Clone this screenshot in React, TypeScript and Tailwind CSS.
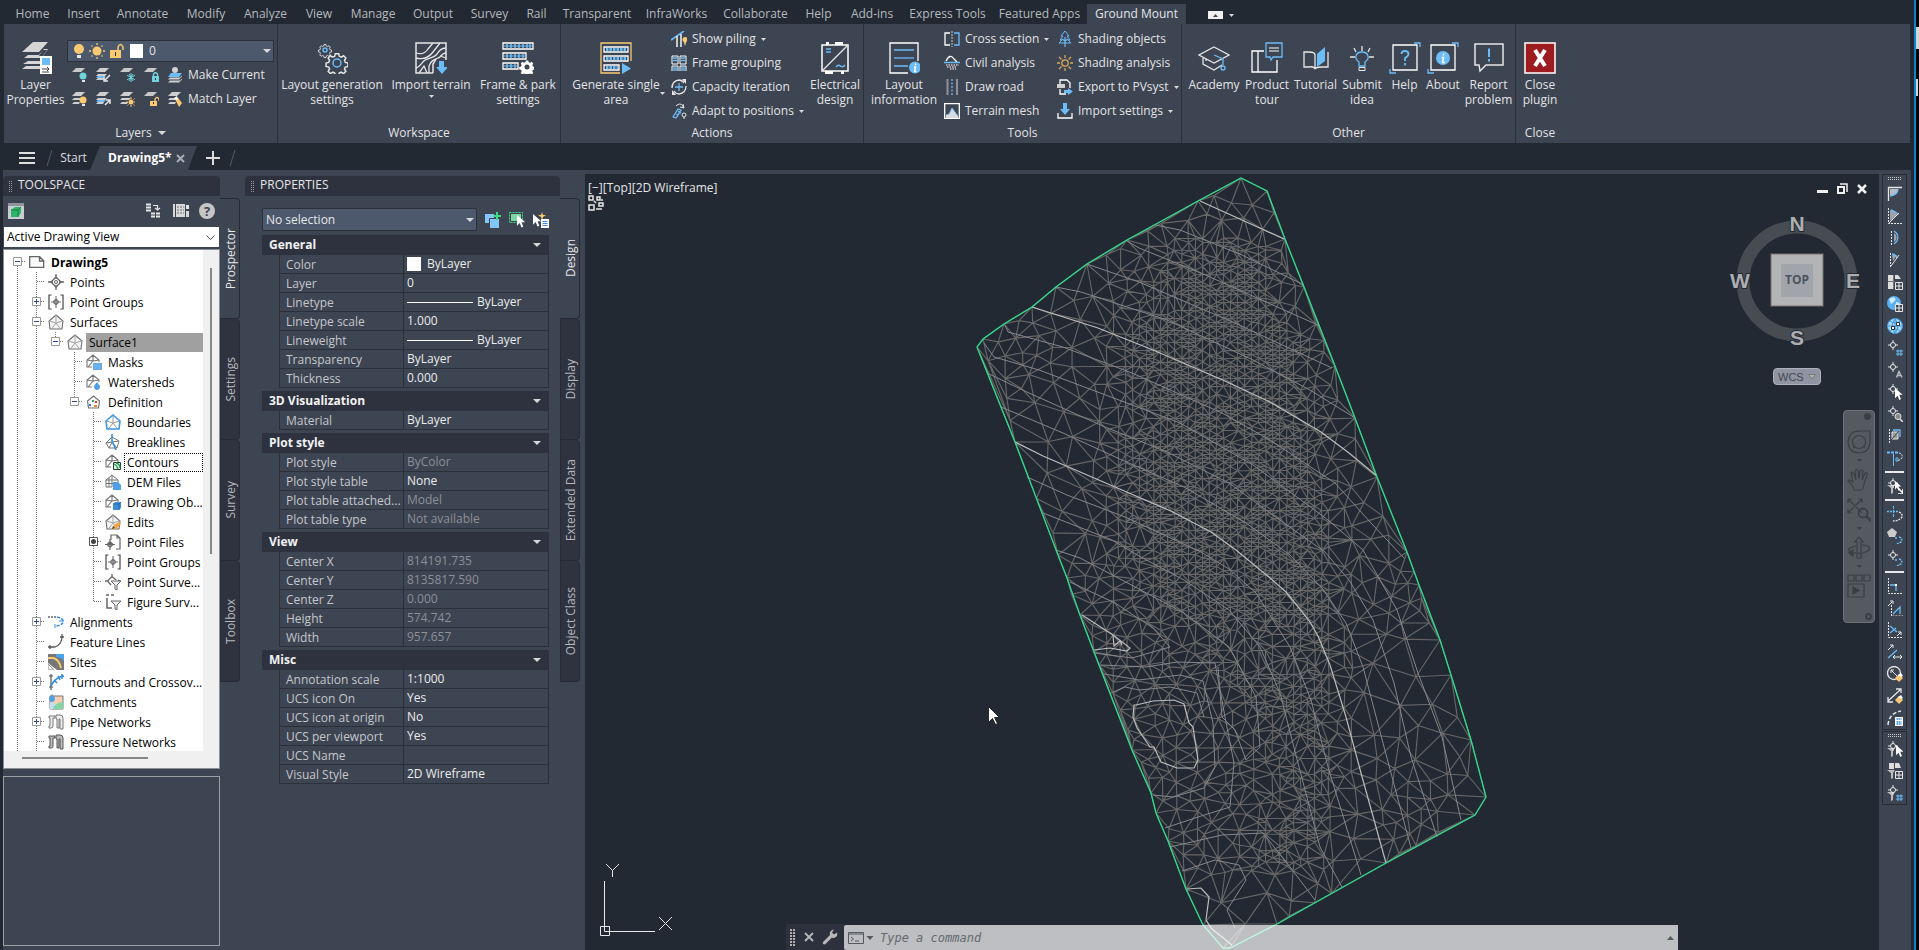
import type { ReactNode } from 'react';

const W = '#e6e6e6';
const B = '#6cbcf7';
const Y = '#fcc973';

type Point = [number, number];

/* ------------------------------------------------------------------ */
/* Terrain mesh                                                        */
/* ------------------------------------------------------------------ */

const boundary: Point[] = [
  [1241, 178], [1267, 191], [1285, 239], [1304, 287], [1335, 366], [1355, 418], [1377, 477], [1407, 552],
  [1419, 585], [1440, 640], [1451, 675], [1471, 740], [1486, 797], [1475, 815], [1386, 863], [1277, 924],
  [1230, 948], [1223, 948], [1203, 925], [1186, 889], [1168, 841], [1156, 813], [1151, 793], [1132, 750],
  [1094, 652], [1080, 615], [1067, 578], [1058, 555], [1015, 442], [977, 347], [983, 339], [1004, 324],
  [1032, 307], [1056, 287], [1087, 264], [1127, 240], [1198, 201],
];

const majorContours = [
  '1200,201 1242,220 1284,239',
  '1032,307 1098,328 1153,350 1225,381 1270,402 1321,432 1349,453 1377,476',
  '1015,442 1043,456 1115,487 1173,512 1211,532 1236,550 1270,578 1286,592 1299,608 1310,622 1318,636 1330,665 1346,717 1361,773 1386,863',
  '1136,705 1153,701 1174,700 1184,704 1189,723 1193,727 1198,760 1194,768 1177,768 1161,762 1154,747 1150,747 1137,728 1133,717 1134,705 1136,705',
  '1082,615 1113,635 1130,648 1127,651 1110,648 1094,650',
  '1113,635 1114,646 1120,641 1122,645',
  '1187,889 1201,888 1209,897 1206,920 1212,929 1232,945',
];

const minorContours = [
  '1155,225 1180,230 1242,255 1304,285',
  '1127,241 1139,248 1201,273 1320,326',
  '1087,264 1139,282 1235,323 1332,368',
  '1056,287 1081,292 1167,320 1253,360 1310,390 1355,418',
  '1005,325 1008,332 1063,347 1132,373 1222,413 1270,440 1335,483 1371,523 1404,558',
  '984,343 994,357 1039,370 1111,397 1180,423 1253,465 1301,500 1328,520 1363,550 1397,610 1418,673 1442,737 1461,820',
  '987,373 1029,393 1105,427 1167,452 1229,483 1277,518 1325,552 1349,580 1373,620 1394,683 1411,757 1437,837',
  '1001,407 1063,433 1122,460 1184,487 1246,523 1290,555 1322,588 1346,623 1363,667 1383,743 1411,848',
  '1027,477 1067,495 1125,517 1201,552 1229,569 1256,593 1290,647 1311,700 1328,767 1361,875',
  '1043,513 1112,540 1139,556 1184,580 1229,610 1260,647 1280,693 1299,767 1320,847 1342,887',
  '1056,550 1080,558 1122,580 1184,613 1229,647 1256,697 1260,747 1246,760 1235,730 1222,717 1218,667',
  '1070,582 1115,603 1153,628 1170,647 1132,658 1094,653',
  '1101,665 1146,667 1177,662 1215,663 1225,717 1234,763 1230,807 1198,817 1165,828',
  '1104,674 1139,680 1180,675 1203,681 1213,723 1215,767 1204,788 1173,797 1153,795',
  '1111,693 1125,687 1139,690 1170,687 1197,693 1204,717',
  '1170,847 1222,835 1263,833 1290,867 1315,900',
  '1182,871 1215,860 1239,865 1246,880 1227,910 1235,928',
];

// y, left edge, right edge of the densely surveyed strip
const strip = [
  [238, 1170, 1266], [300, 1136, 1278], [340, 1122, 1304], [403, 1118, 1318], [560, 1118, 1334],
  [617, 1134, 1334], [655, 1190, 1330], [717, 1258, 1328], [783, 1268, 1332], [833, 1252, 1318], [872, 1240, 1304],
];

function stripAt(y: number): Point | null {
  for (let i = 1; i < strip.length; i++) {
    const [y0, l0, r0] = strip[i - 1];
    const [y1, l1, r1] = strip[i];
    if (y >= y0 && y <= y1) {
      const t = (y - y0) / (y1 - y0);
      return [l0 + (l1 - l0) * t, r0 + (r1 - r0) * t];
    }
  }
  return null;
}

function inside(x: number, y: number) {
  let hit = false;
  for (let i = 0, j = boundary.length - 1; i < boundary.length; j = i++) {
    const [xi, yi] = boundary[i];
    const [xj, yj] = boundary[j];
    if (yi > y !== yj > y && x < ((xj - xi) * (y - yi)) / (yj - yi) + xi) hit = !hit;
  }
  return hit;
}

interface Circle {
  a: number;
  b: number;
  c: number;
  x: number;
  y: number;
  r: number;
}

function circum(p: Point[], a: number, b: number, c: number): Circle {
  const [ax, ay] = p[a];
  const [bx, by] = p[b];
  const [cx, cy] = p[c];
  const d = 2 * (ax * (by - cy) + bx * (cy - ay) + cx * (ay - by)) || 1e-9;
  const a2 = ax * ax + ay * ay;
  const b2 = bx * bx + by * by;
  const c2 = cx * cx + cy * cy;
  const x = (a2 * (by - cy) + b2 * (cy - ay) + c2 * (ay - by)) / d;
  const y = (a2 * (cx - bx) + b2 * (ax - cx) + c2 * (bx - ax)) / d;
  return { a, b, c, x, y, r: (ax - x) ** 2 + (ay - y) ** 2 };
}

// Sweep version of Bowyer-Watson
function triangulate(source: Point[]) {
  const n = source.length;
  const pts = [...source].sort((p, q) => p[0] - q[0]);
  pts.push([-9000, -9000], [1200, 20000], [12000, -9000]);
  let open = [circum(pts, n, n + 1, n + 2)];
  const closed: Circle[] = [];
  for (let i = 0; i < n; i++) {
    const [x, y] = pts[i];
    const edges = new Map<number, number[] | null>();
    const next: Circle[] = [];
    for (const t of open) {
      const dx = x - t.x;
      if (dx > 0 && dx * dx > t.r) {
        closed.push(t);
        continue;
      }
      if (dx * dx + (y - t.y) ** 2 > t.r) {
        next.push(t);
        continue;
      }
      for (const [u, v] of [[t.a, t.b], [t.b, t.c], [t.c, t.a]]) {
        const key = Math.min(u, v) * 100000 + Math.max(u, v);
        edges.set(key, edges.has(key) ? null : [u, v]);
      }
    }
    edges.forEach((e) => {
      if (e) next.push(circum(pts, e[0], e[1], i));
    });
    open = next;
  }
  return { pts, triangles: [...closed, ...open].filter((t) => t.a < n && t.b < n && t.c < n) };
}

function buildMesh() {
  let seed = 20231;
  const rand = () => {
    seed = (seed * 16807) % 2147483647;
    return seed / 2147483647;
  };
  const pts: Point[] = [];
  boundary.forEach(([x, y], i) => {
    const [nx, ny] = boundary[(i + 1) % boundary.length];
    const parts = Math.max(1, Math.round(Math.hypot(nx - x, ny - y) / 80));
    for (let k = 0; k < parts; k++) pts.push([x + ((nx - x) * k) / parts, y + ((ny - y) * k) / parts]);
  });
  for (let x = 1118; x < 1336; x += 7) {
    for (let y = 238; y < 872; y += 4) {
      const s = stripAt(y);
      if (!s || x < s[0] || x > s[1] || !inside(x, y)) continue;
      const core = x > s[0] + 34 && x < s[1] - 14 && y > 256 && y < 625;
      if (rand() < (core ? 0.66 : 0.38)) pts.push([x + rand() * 1.2, y + rand() * 0.7]);
    }
  }
  for (let k = 0; k < 9000; k++) {
    const x = 977 + rand() * 510;
    const y = 180 + rand() * 768;
    if (!inside(x, y)) continue;
    const s = stripAt(y);
    if (s && x > s[0] - 4 && x < s[1] + 4) continue;
    // the survey thins out in patches away from the strip
    let gap = 19 + 8 * Math.sin(x / 31) * Math.cos(y / 37);
    if (s && x > s[0] - 24 && x < s[1] + 22) gap = 10;
    if (y > 560 && y < 875 && x < 1280) gap = 10;
    if (y < 240) gap = 15;
    if (pts.every(([px, py]) => (px - x) ** 2 + (py - y) ** 2 > gap * gap)) {
      pts.push([gap < 12 ? Math.round(x / 7) * 7 + rand() : x, y]);
    }
  }
  const mesh = triangulate(pts);
  const seen = new Set<number>();
  let path = '';
  for (const { a, b, c } of mesh.triangles) {
    const [p, q, r] = [mesh.pts[a], mesh.pts[b], mesh.pts[c]];
    if (!inside((p[0] + q[0] + r[0]) / 3, (p[1] + q[1] + r[1]) / 3)) continue;
    for (const [u, v] of [[a, b], [b, c], [c, a]]) {
      const key = Math.min(u, v) * 100000 + Math.max(u, v);
      if (seen.has(key)) continue;
      seen.add(key);
      const [s, e] = [mesh.pts[u], mesh.pts[v]];
      path += `M${s[0].toFixed(1)} ${s[1].toFixed(1)}L${e[0].toFixed(1)} ${e[1].toFixed(1)}`;
    }
  }
  return path;
}

const meshPath = buildMesh();

/* ------------------------------------------------------------------ */
/* Icons                                                               */
/* ------------------------------------------------------------------ */

function Svg({ size = 16, children }: { size?: number; children: ReactNode }) {
  return (
    <svg width={size} height={size} viewBox={`0 0 ${size} ${size}`} fill="none" className="shrink-0" aria-hidden="true">
      {children}
    </svg>
  );
}

function Caret({ small }: { small?: boolean }) {
  return (
    <svg width={small ? 5 : 8} height={small ? 3 : 4} viewBox="0 0 8 4" preserveAspectRatio="none" className="shrink-0" aria-hidden="true">
      <path d="M0 0h8L4 4z" fill="#d8d8d8" />
    </svg>
  );
}

const sheet = 'M5 1h9l-4 4H1z';
const stack = 'M5 1h9l-4 4H1zM3 7h9l-2 2H1zM3 11h6l-1 2H1z';
const gear =
  'M-1.5-8h3l.5 2.2 1.7.7 2-1.2 2 2-1.2 2 .7 1.8 2.3.5v3l-2.3.5-.7 1.7 1.2 2-2 2-2-1.2-1.7.7-.5 2.3h-3l-.5-2.3-1.7-.7-2 1.2-2-2 1.2-2-.7-1.7-2.3-.5v-3l2.3-.5.7-1.8-1.2-2 2-2 2 1.2 1.7-.7z';
const cursor = 'M0 0v12l3-3 2 5 2-1-2-5h4z';

const bulb = (c: string) => (
  <>
    <circle cx="12" cy="9" r="3.5" fill={c} />
    <path d="M11 13h3v2h-3z" fill={W} />
  </>
);

const layerTools: { label: string; icon: ReactNode }[] = [
  { label: 'Layer off', icon: <><path d={sheet} fill="#c9c9c9" />{bulb('#6fd3dc')}</> },
  { label: 'Isolate layer', icon: <><path d={stack} fill="#d0d0d0" /><path d="M3 9h8l-2 2H1z" fill={B} /><path d="M15 8l-5 5M9 10v4h4" stroke={W} strokeWidth="1.5" /></> },
  { label: 'Freeze layer', icon: <><path d={sheet} fill="#c9c9c9" /><path d="M12 6v9M8 8.300l8 4.500M16 8.300l-8 4.500M10 7l4 7M14 7l-4 7" stroke="#6fd3dc" /></> },
  { label: 'Lock layer', icon: <><path d={sheet} fill="#c9c9c9" /><path d="M9 9h7v6H9z" fill="#6fd3dc" /><path d="M10.500 9V7q2-2.500 4 0v2" stroke="#6fd3dc" strokeWidth="1.300" /><path d="M12 11h1v2h-1z" fill="#333" /></> },
  { label: 'Layer on', icon: <><path d={stack} fill="#d0d0d0" />{bulb(Y)}</> },
  { label: 'Unisolate layer', icon: <><path d={stack} fill="#d0d0d0" /><path d="M3 9h8l-2 2H1z" fill={B} /><path d="M10 14l5-5M11 9h4v4" stroke={W} strokeWidth="1.500" /></> },
  { label: 'Thaw layer', icon: <><path d={stack} fill="#d0d0d0" /><circle cx="12" cy="11" r="2.500" fill={Y} /><path d="M12 6v2M12 14v2M7 11h2M15 11h1M8.500 7.500l1 1M14.500 13.500l1 1M15.500 7.500l-1 1M9.500 13.500l-1 1" stroke={Y} /></> },
  { label: 'Unlock layer', icon: <><path d={sheet} fill="#c9c9c9" /><path d="M7 10h7v5H7z" fill={Y} /><path d="M12 10V8q2-3 4 0v2" stroke={Y} strokeWidth="1.300" /><path d="M10 11h1v2h-1z" fill="#333" /></> },
];

const icons = {
  layerProps: (
    <>
      <path d="M13 0h15l-9 10H2zM8 14h15l4-6h-4l-4 6M8 13h11l5-6h4l-6 9H4zM8 19h12l2-2v5H3zM6 24h14v3H2z" fill="#d6d6d6" />
      <path d="M20 14h12v18H20z" fill="#fff" />
      <path d="M22 16h8v7h-8z" fill={B} />
      <path d="M22 27h7M27 25l2 2-2 2M29 30h-7" stroke="#444" />
    </>
  ),
  gears: (
    <>
      <g stroke={W} strokeWidth="1.300">
        <path d={gear} transform="translate(9 8) scale(.68)" />
        <path d={gear} transform="translate(21 21) scale(1.150)" />
      </g>
      <circle cx="9" cy="8" r="2" stroke={B} strokeWidth="1.500" />
      <circle cx="21" cy="21" r="4" stroke={B} strokeWidth="1.500" />
    </>
  ),
  terrain: (
    <>
      <path d="M18 31H1V1h30v17M18 31v-9l3-5" stroke={W} strokeWidth="1.500" />
      <path d="M1 11c6 2 10-1 12-4l5-6M1 16c8 2 14-2 17-6l7-9M31 6c-5 0-7 3-9 6-3 4-9 4-12 6s-5 7-9 8M31 11c-5 0-4 4-8 5-5 2-7 3-9 8v7M4 31l5-7 3 7M31 16l-6-2" stroke={W} strokeWidth="1.300" />
      <path d="M24 19h5v6h4l-6 7-6-7h3z" fill={B} />
    </>
  ),
  frames: (
    <>
      <g stroke="#fff" strokeWidth="1.300">
        <path d="M1 1h30v6H1zM1 11h23v6H1zM1 21h15v6H1z" />
      </g>
      <path d="M2 4h28M2 14h21M2 24h13" stroke={B} />
      <path d="M5 2v4M9 2v4M13 2v4M17 2v4M21 2v4M25 2v4M28 2v4M5 12v4M9 12v4M13 12v4M17 12v4M21 12v4M5 22v4M9 22v4M13 22v4" stroke={B} strokeWidth="1.500" />
      <path d={gear} transform="translate(25 25) scale(.82)" fill="#fff" />
      <circle cx="25" cy="25" r="2.500" fill="#3d4452" />
    </>
  ),
  generate: (
    <>
      <path d="M20 31H1V1h30v18" stroke={Y} strokeWidth="1.300" />
      <path d="M4 5h24v5H4zM4 14h24v5H4zM4 23h15v5H4z" fill="#3d4452" stroke="#fff" strokeWidth="1.300" />
      <path d="M6 7.500h20M6 16.500h20M6 25.500h12" stroke={B} strokeWidth="3" strokeDasharray="2.500 1" />
      <path d="M22 21l9 5.500-9 5.500z" fill={B} />
    </>
  ),
  electrical: (
    <>
      <path d="M3 3h26v26H3z" stroke="#fff" strokeWidth="1.500" />
      <path d="M29 3L3 29" stroke={W} strokeWidth="1.300" />
      <path d="M7 0h3v3H7zM16 0h8v3h-8zM6 29h8v3H6zM22 29h3v3h-3z" fill="#fff" />
      <path d="M7 7h5M7 10h5" stroke={B} strokeWidth="1.500" />
      <path d="M17 25q2.500-3 4.500-1t4.500-1" stroke={B} strokeWidth="1.500" />
    </>
  ),
  info: (
    <>
      <path d="M20 31H2V1h28v18" stroke="#fff" strokeWidth="1.300" />
      <path d="M6 8h20M6 24h14" stroke={B} strokeWidth="1.300" />
      <path d="M6 16h20" stroke="#5b8fc0" strokeWidth="2" />
      <circle cx="27" cy="25.500" r="6" fill={B} />
      <path d="M27.500 21.500v1.500M26 25h1.500l-1 4.500h2" stroke="#fff" strokeWidth="1.400" />
    </>
  ),
  academy: (
    <>
      <path d="M16 5l15 8-15 8-15-8zM5 16v6l11 6 8-5M8 19v-2" stroke={W} strokeWidth="1.300" />
      <path d="M16 13l9 4v6" stroke={B} strokeWidth="1.300" />
      <circle cx="25" cy="26" r="2" stroke={B} strokeWidth="1.300" />
    </>
  ),
  product: (
    <>
      <path d="M13 9H1v21h25V18M7 9v21" stroke="#fff" strokeWidth="1.300" />
      <path d="M15 1h16v14H22l-2 3-1-3h-4z" stroke={B} strokeWidth="1.300" />
      <path d="M18 6h10M18 9h10" stroke="#fff" />
    </>
  ),
  tutorial: (
    <>
      <path d="M4 10h5q6 0 6 3v14q-1-3-6-2H4zM15 27q1-2 6-2h7V10" stroke={W} strokeWidth="1.300" />
      <path d="M17 12l8-7v14l-8 6z" fill={B} />
    </>
  ),
  idea: (
    <>
      <path d="M16 4v5M8 6l2 4M24 6l-2 4M4 15h5M23 15h5" stroke={W} strokeWidth="1.300" />
      <path d="M13 24v-4q-4-3-3-6 1-4 6-4t6 4q1 3-3 6v4z" stroke={B} strokeWidth="1.300" />
      <path d="M13 25.500h6v3h-6z" stroke={W} />
    </>
  ),
  help: (
    <>
      <path d="M4 3h24v25H4z" stroke="#fff" strokeWidth="1.300" />
      <path d="M1 27v4h6M25 1h6v4" stroke={B} strokeWidth="1.300" />
      <path d="M12.500 12q0-3 3.500-3t3.500 3q0 2-3.500 4v3M16 21v2.500" stroke={B} strokeWidth="1.800" />
    </>
  ),
  about: (
    <>
      <path d="M4 3h24v25H4z" stroke="#fff" strokeWidth="1.300" />
      <path d="M1 27v4h6M25 1h6v4" stroke={B} strokeWidth="1.300" />
      <circle cx="16" cy="16" r="7" fill={B} />
      <path d="M16.500 11.500v2M14.500 15.500h2l-1 5h2.500" stroke="#fff" strokeWidth="1.500" />
    </>
  ),
  report: (
    <>
      <path d="M2 2h28v21H13l-6 6-1-6H2z" stroke={W} strokeWidth="1.500" />
      <path d="M16 6.500V15M16 17v2.500" stroke={B} strokeWidth="2" />
    </>
  ),
  close: (
    <>
      <path d="M1 1h30v30H1z" fill="#9c1c1f" stroke="#fff" strokeWidth="1.500" />
      <path d="M11 8l10 16M21 8L11 24" stroke="#fff" strokeWidth="4" />
    </>
  ),
  piling: (
    <>
      <path d="M0 9L13 0" stroke={B} strokeWidth="1.600" />
      <path d="M6 5v11M10 3v13" stroke="#fff" strokeWidth="1.400" />
      <circle cx="14" cy="8.500" r="2.500" fill={Y} />
      <path d="M12.500 10h3L14 15z" fill={Y} />
    </>
  ),
  grouping: (
    <>
      <path d="M1 1h6v8H1zM9 1h6v8H9zM1 11h6v5M9 16v-5h6v5M1 16v-5" stroke="#fff" />
      <path d="M2 3h4M2 5.500h4M10 3h4M10 5.500h4M2 13h4M10 13h4M2 15h4M10 15h4" stroke={B} strokeWidth="1.300" />
    </>
  ),
  iteration: (
    <>
      <path d="M1 9q0-7 7-8 3 0 5 3M15 7q0 7-7 8-3 0-5-3" stroke={W} strokeWidth="1.300" />
      <path d="M11 0h4v5M5 16H1v-5" fill={W} />
      <path d="M8 4v8M4 8h8" stroke={B} strokeWidth="1.300" />
    </>
  ),
  adapt: (
    <>
      <path d="M5 3q4-4 7 0v2M12 1l1 4-4-1" stroke={W} />
      <path d="M2 14l5-8 3 1-5 8zM5 11l3 1M7 8l3 2" stroke={B} strokeWidth="1.300" />
      <circle cx="13" cy="12" r="2" stroke={W} />
      <path d="M13 14v2" stroke={W} />
    </>
  ),
  section: (
    <>
      <path d="M6 2H1v12h5" stroke="#fff" strokeWidth="1.300" />
      <path d="M10 2h5v12h-5" stroke={B} strokeWidth="1.300" />
      <path d="M8 0v16" stroke="#ccc" strokeDasharray="2 1" />
    </>
  ),
  civil: (
    <>
      <path d="M2 6q4-8 8-2l3 3" stroke="#fff" strokeWidth="1.300" />
      <path d="M0 7.500h16" stroke={B} strokeWidth="1.500" />
      <path d="M2 10h13M3 12h10M6 14h6" stroke="#ccc" strokeDasharray="1.500 1" strokeWidth="1.500" />
    </>
  ),
  road: (
    <>
      <path d="M3.500 0v16M13 0v16" stroke="#8e9298" strokeWidth="2" />
      <path d="M8 0v16" stroke={B} strokeDasharray="2 1.500" strokeWidth="1.300" />
    </>
  ),
  mesh: (
    <>
      <path d="M.7.7h14.600v14.600H.7z" stroke="#fff" strokeWidth="1.300" />
      <path d="M2 15v-3l3-1 3-6 3 4 3 4v2z" fill="#d8dbe0" />
      <path d="M2 12l3-1 3-6 3 4 3 4" stroke={B} strokeWidth=".8" />
    </>
  ),
  trees: (
    <>
      <path d="M8 0l4 5h-2l3 4h-2l3 3H2l3-3H3l3-4H4z" stroke={B} />
      <path d="M8 6v10M5 8l3 2 3-2" stroke={B} strokeWidth="1.200" />
    </>
  ),
  sun: (
    <>
      <circle cx="8" cy="8" r="3.200" stroke="#dba85e" strokeWidth="1.300" />
      <path d="M8 0v3M8 13v3M0 8h3M13 8h3M2 2l2.500 2.500M11.500 11.500L14 14M14 2l-2.500 2.500M4.500 11.500L2 14" stroke="#dba85e" strokeWidth="1.300" />
    </>
  ),
  exportPv: (
    <>
      <path d="M3 5V1h7l3 3v5M3 10v5h6" stroke="#fff" strokeWidth="1.300" />
      <path d="M0 5h8v4H0z" fill="#d0d0d0" />
      <path d="M7 11h4V9l5 3.500-5 3.500v-2H7z" fill={B} />
    </>
  ),
  importSet: (
    <>
      <path d="M1 10v5h14v-5" stroke="#fff" strokeWidth="1.300" />
      <path d="M6 0h4v6h3l-5 6-5-6h3z" fill={B} />
    </>
  ),
};

/* ------------------------------------------------------------------ */
/* Ribbon                                                              */
/* ------------------------------------------------------------------ */

const menuTabs = [
  'Home', 'Insert', 'Annotate', 'Modify', 'Analyze', 'View', 'Manage', 'Output', 'Survey', 'Rail', 'Transparent',
  'InfraWorks', 'Collaborate', 'Help', 'Add-ins', 'Express Tools', 'Featured Apps', 'Ground Mount',
];

function MenuTabs() {
  return (
    <nav className="flex h-6 items-end pl-[6px]">
      <div className="grid grid-cols-[53px_49px_69px_58px_61px_46px_62px_58px_55px_39px_82px_77px_81px_45px_62px_89px_95px_99px]">
        {menuTabs.map((tab) => (
          <button
            key={tab}
            className={`h-5 whitespace-nowrap text-center leading-5 ${
              tab === 'Ground Mount' ? 'bg-[#3d4452] text-[#e4e5e7]' : 'text-[#b6b9bd]'
            }`}
          >
            {tab}
          </button>
        ))}
      </div>
      <button aria-label="Minimize ribbon" className="mb-[5px] ml-[22px] flex items-center gap-[6px]">
        <span className="flex h-2 w-[15px] items-center justify-center bg-[#f0f0f0]">
          <svg width="5" height="3" viewBox="0 0 5 3" aria-hidden="true">
            <path d="M0 3h5L2.500 0z" fill="#444" />
          </svg>
        </span>
        <Caret small />
      </button>
    </nav>
  );
}

interface BigButtonProps {
  icon: ReactNode;
  lines: string[];
  width: string;
  menu?: 'below' | 'side';
}

function BigButton({ icon, lines, width, menu }: BigButtonProps) {
  return (
    <button className={`relative flex shrink-0 flex-col items-center pt-[18px] ${width}`}>
      <Svg size={32}>{icon}</Svg>
      <span className="mt-[3px] block whitespace-nowrap text-center leading-[15px]">
        {lines.map((line) => (
          <span key={line} className="block">{line}</span>
        ))}
      </span>
      {menu === 'below' && <span className="mt-[3px]"><Caret small /></span>}
      {menu === 'side' && <span className="absolute right-[6px] top-[68px] flex"><Caret small /></span>}
    </button>
  );
}

function SmallButton({ icon, label, menu }: { icon: ReactNode; label: string; menu?: boolean }) {
  return (
    <button className="flex h-6 items-center whitespace-nowrap">
      <Svg>{icon}</Svg>
      <span className="ml-[5px] mr-[5px]">{label}</span>
      {menu && <Caret small />}
    </button>
  );
}

function Panel({ title, width, menu, children }: { title: string; width: string; menu?: boolean; children: ReactNode }) {
  return (
    <section className={`flex shrink-0 flex-col border-r border-[#2b303b] ${width}`}>
      <div className="flex flex-1 items-start">{children}</div>
      <h2 className="flex h-5 items-center justify-center gap-[6px]">
        {title}
        {menu && <Caret />}
      </h2>
    </section>
  );
}

function Ribbon() {
  return (
    <div className="mx-1 flex h-[119px] bg-[#3d4452] text-[#e2e3e5]">
      <Panel title="Layers" width="w-[274px]" menu>
        <BigButton icon={icons.layerProps} lines={['Layer', 'Properties']} width="w-[63px]" />
        <div className="pt-4">
          <button className="mb-px flex h-[22px] w-[207px] items-center border border-[#2b303b] bg-[#4c586c] pl-1 pr-[2px]">
            <svg width="74" height="16" viewBox="0 0 74 16" fill="none" aria-hidden="true">
              <circle cx="7" cy="6" r="5" fill={Y} />
              <path d="M5 12h4v3H5z" fill={W} />
              <circle cx="25" cy="8" r="4.500" fill={Y} />
              <path d="M25 0v2M25 14v2M17 8h2M31 8h2M19.500 2.500l1 1M29.500 12.500l1 1M30.500 2.500l-1 1M20.500 12.500l-1 1" stroke={Y} strokeWidth="1.300" />
              <path d="M38 7h11v8H38z" fill={Y} />
              <path d="M46 7V4q2.500-5 5 0v3" stroke={Y} strokeWidth="1.500" />
              <path d="M43 9h1v4h-1z" fill="#333" />
              <path d="M58 1h13v14H58z" fill="#fff" />
            </svg>
            <span className="ml-[3px] flex-1 text-left">0</span>
            <Caret />
          </button>
          <div className="grid grid-cols-[24px_24px_24px_24px_auto] justify-start">
            {layerTools.slice(0, 4).map((tool) => (
              <button key={tool.label} aria-label={tool.label} className="flex h-6 items-center justify-center">
                <Svg>{tool.icon}</Svg>
              </button>
            ))}
            <button className="flex h-6 items-center gap-[5px] pl-1">
              <Svg>
                <path d="M4 6h11l-3 4H1z" fill={B} />
                <circle cx="8" cy="3" r="3" fill="#d0d0d0" />
                <path d="M3 10.500h10l2-2v1l-3 3H1zM3 13.500h10l2-2v1l-3 3H1z" fill="#d0d0d0" />
              </Svg>
              Make Current
            </button>
            {layerTools.slice(4).map((tool) => (
              <button key={tool.label} aria-label={tool.label} className="flex h-6 items-center justify-center">
                <Svg>{tool.icon}</Svg>
              </button>
            ))}
            <button className="flex h-6 items-center gap-[5px] pl-1">
              <Svg>
                <path d={stack} fill="#d0d0d0" />
                <path d="M8 8l3-1 4 5-3 4z" fill={Y} />
                <path d="M7 7l3-2 1 3-2 1z" fill="#fff" />
              </Svg>
              Match Layer
            </button>
          </div>
        </div>
      </Panel>

      <Panel title="Workspace" width="w-[283px]">
        <BigButton icon={icons.gears} lines={['Layout generation', 'settings']} width="w-[108px]" />
        <BigButton icon={icons.terrain} lines={['Import terrain']} width="w-[90px]" menu="below" />
        <BigButton icon={icons.frames} lines={['Frame & park', 'settings']} width="w-[84px]" />
      </Panel>

      <Panel title="Actions" width="w-[303px]">
        <BigButton icon={icons.generate} lines={['Generate single', 'area']} width="w-[110px]" menu="side" />
        <div className="w-[139px] shrink-0 pt-[3px]">
          <SmallButton icon={icons.piling} label="Show piling" menu />
          <SmallButton icon={icons.grouping} label="Frame grouping" />
          <SmallButton icon={icons.iteration} label="Capacity iteration" />
          <SmallButton icon={icons.adapt} label="Adapt to positions" menu />
        </div>
        <BigButton icon={icons.electrical} lines={['Electrical', 'design']} width="w-[50px]" />
      </Panel>

      <Panel title="Tools" width="w-[318px]">
        <BigButton icon={icons.info} lines={['Layout', 'information']} width="w-[80px]" />
        <div className="w-[113px] shrink-0 pt-[3px]">
          <SmallButton icon={icons.section} label="Cross section" menu />
          <SmallButton icon={icons.civil} label="Civil analysis" />
          <SmallButton icon={icons.road} label="Draw road" />
          <SmallButton icon={icons.mesh} label="Terrain mesh" />
        </div>
        <div className="pt-[3px]">
          <SmallButton icon={icons.trees} label="Shading objects" />
          <SmallButton icon={icons.sun} label="Shading analysis" />
          <SmallButton icon={icons.exportPv} label="Export to PVsyst" menu />
          <SmallButton icon={icons.importSet} label="Import settings" menu />
        </div>
      </Panel>

      <Panel title="Other" width="w-[334px]">
        <BigButton icon={icons.academy} lines={['Academy']} width="w-[60px] pl-1" />
        <BigButton icon={icons.product} lines={['Product', 'tour']} width="w-[50px]" />
        <BigButton icon={icons.tutorial} lines={['Tutorial']} width="w-[47px]" />
        <BigButton icon={icons.idea} lines={['Submit', 'idea']} width="w-[46px]" />
        <BigButton icon={icons.help} lines={['Help']} width="w-[39px]" />
        <BigButton icon={icons.about} lines={['About']} width="w-[38px]" />
        <BigButton icon={icons.report} lines={['Report', 'problem']} width="w-[53px]" />
      </Panel>

      <section className="flex w-12 flex-col">
        <div className="flex flex-1">
          <BigButton icon={icons.close} lines={['Close', 'plugin']} width="w-12" />
        </div>
        <h2 className="flex h-5 items-center justify-center">Close</h2>
      </section>
    </div>
  );
}

function FileTabs() {
  return (
    <div className="flex h-[27px] items-end text-[#dcdde0]">
      <button aria-label="Menu" className="flex h-6 w-[46px] items-center justify-center pl-2">
        <svg width="16" height="12" viewBox="0 0 16 12" aria-hidden="true">
          <path d="M0 1h16M0 6h16M0 11h16" stroke="#dedede" strokeWidth="2" />
        </svg>
      </button>
      <svg width="8" height="24" viewBox="0 0 8 24" aria-hidden="true">
        <path d="M1 20L6 4" stroke="#555c69" />
      </svg>
      <button className="h-6 w-9 pl-[3px] text-center">Start</button>
      <div className="flex h-6 w-[107px] items-center bg-[#3d4452] pl-[18px] font-bold text-white [clip-path:polygon(10px_0,100%_0,calc(100%-9px)_100%,0_100%)]">
        <span className="flex-1">Drawing5*</span>
        <button aria-label="Close drawing" className="mr-3">
          <svg width="9" height="9" viewBox="0 0 9 9" aria-hidden="true">
            <path d="M1 1l7 7M8 1L1 8" stroke="#a9adb4" strokeWidth="2" />
          </svg>
        </button>
      </div>
      <button aria-label="New drawing" className="flex h-6 w-8 items-center justify-center">
        <svg width="14" height="14" viewBox="0 0 14 14" aria-hidden="true">
          <path d="M7 0v14M0 7h14" stroke="#dedede" strokeWidth="2" />
        </svg>
      </button>
      <svg width="8" height="24" viewBox="0 0 8 24" aria-hidden="true">
        <path d="M1 20L6 4" stroke="#555c69" />
      </svg>
    </div>
  );
}

/* ------------------------------------------------------------------ */
/* Toolspace                                                           */
/* ------------------------------------------------------------------ */

const houseOutline = 'M8 1l7 6-1 8H2L1 7z';
const houseRays = 'M8 1v8M8 9l6.500-2M8 9l4.500 6M8 9l-4.500 6M8 9L1.500 7';
const houseSmall = 'M13 8V6L7 1 1 6v7h5M7 1v6M1 6l6 1 6-1M7 7l-5 6';

const house = (
  <>
    <path d={houseOutline} fill="#f4f4f4" stroke="#6f6f6f" strokeWidth="1.100" />
    <path d={houseRays} stroke="#a5a5a5" />
  </>
);
const smallHouse = <path d={houseSmall} stroke="#757575" strokeWidth="1.100" />;

const treeIcons: Record<string, ReactNode> = {
  drawing: <path d="M.7 2.700h10l4 4v6.600H.7zM10.500 3v4h4" fill="#fafafa" stroke="#666" strokeWidth="1.300" />,
  point: (
    <>
      <path d="M8 0v5M8 11v5M0 8h5M11 8h5" stroke="#666" strokeWidth="1.300" />
      <path d="M8 3l5 5-5 5-5-5z" stroke="#666" strokeWidth="1.300" />
      <circle cx="8" cy="8" r="1.500" stroke="#666" />
    </>
  ),
  pointGroup: (
    <>
      <path d="M3.500 1H1v14h2.500M12.500 1H15v14h-2.500" stroke="#444" strokeWidth="1.200" />
      <path d="M8 2v12M3 8h10M8 5l3 3-3 3-3-3z" stroke="#777" strokeWidth="1.200" />
    </>
  ),
  surface: house,
  masks: (<>{smallHouse}<path d="M7.500 9.500h8v6h-8z" fill="#63b3f5" stroke="#3a6ea0" strokeDasharray="1 1" /></>),
  watersheds: (<>{smallHouse}<path d="M11 8l3 4q0 4-3 4t-3-4z" fill="#4f9fe6" /></>),
  definition: (<><path d="M7.500 2l6 5-1 7h-10l-1-7z" fill="#f7f7f7" stroke="#757575" strokeWidth="1.200" /><path d="M3 10h2v2H3z" fill="#2f7fd6" /><path d="M9 7h2v2H9z" fill="#c0392b" /><path d="M6 6h2v2H6z" fill="#37a35b" /><path d="M8 11h3v2H8z" fill="#e08a2c" /></>),
  boundaries: (<><path d={houseRays} stroke="#9a9a9a" /><path d={houseOutline} stroke="#3d95e6" strokeWidth="1.600" /></>),
  breaklines: (<><path d="M7 3l7 4-2 7H4L1 9zM7 8l7-1M7 8l-3 6M7 8L1 9M7 8l5 6" stroke="#757575" /><path d="M7 0v7l4 9" stroke="#2f8be0" strokeWidth="1.500" /></>),
  contours: (<>{smallHouse}<path d="M8.500 8.500h7v7h-7z" fill="#d9f4e2" stroke="#333" /><path d="M9 10q3 1 4 5M11 9q4 1 4 5" stroke="#1f9d55" strokeWidth="1.300" /></>),
  dem: (<><path d="M7 1l6 5v3M7 1L1 6v7h6M7 1v12M1 6h12M1 9.500h7M4 4v9" stroke="#757575" /><path d="M8 8h5l3 3v5H8z" fill="#4f9fe6" /></>),
  objects: (<>{smallHouse}<path d="M8 10l2-2h6v6l-2 2H8z" fill="#3f8fd6" /><path d="M8 10h6v6M14 10l2-2" stroke="#2368a8" /></>),
  edits: (<>{house}<path d="M7 15l2-4 5-3 2 2-5 5z" fill="#f1a33c" /><path d="M7 15l1-3 2 2z" fill="#444" /></>),
  pointFiles: (<><path d="M6 6V1h6l3 3v11h-4M12 1v3h3" stroke="#666" strokeWidth="1.200" /><path d="M5 5v11M0 10.500h10M5 7.500l3 3-3 3-3-3z" stroke="#666" strokeWidth="1.200" /></>),
  pointSurvey: (<><path d="M7 0v3M0 7h3M7 2.500l4 3.500M7 2.500L2.500 7 6 11M13 6l2 1" stroke="#666" strokeWidth="1.300" /><path d="M6 7h10l-4 4v5l-2-1v-4z" fill="#eee" stroke="#666" /></>),
  figureSurvey: (<><path d="M1 1h3M6 1h3M2 4v10h5" stroke="#666" strokeWidth="1.500" /><path d="M6 7h10l-4 4v5l-2-1v-4z" fill="#eee" stroke="#666" /></>),
  alignments: (<><path d="M0 3h8" stroke="#666" strokeDasharray="2 1" strokeWidth="1.300" /><path d="M9 3q6 1 6 4.500T8 12" stroke="#2f8be0" strokeDasharray="3 1.500" strokeWidth="1.500" /><path d="M11 7h5M7 10v4" stroke="#2f8be0" /></>),
  feature: <path d="M0 13h7q6-2 7-9V0M2 11v4M12 3h4" stroke="#555" strokeWidth="1.300" />,
  sites: (<><path d="M0 0h16v16H9L0 9z" fill="#777" /><path d="M8 0h8v7q-3-4-8-4z" fill="#4aa3ef" /><path d="M0 4h5q6 1 8 10" stroke={Y} strokeWidth="2" /><path d="M0 10l6 6H0z" fill="#eee" stroke="#999" /></>),
  turnouts: (<><path d="M3 0v16M1 2h4M1 13h4" stroke="#555" strokeWidth="1.200" /><path d="M3 12q4-9 13-10M6 6l3 3M10 2l2 4M14 0v5" stroke="#2f8be0" strokeWidth="1.500" /></>),
  catchments: (<><path d="M2 2h13v13H2z" fill="#f6cfae" stroke="#777" /><path d="M5 15q1-6 10-7v7z" fill="#7fd6a0" /><path d="M4 0l3 4q0 4-3 4T1 4z" fill="#4f9fe6" /><path d="M2 8v7h3q1-4 3-5z" fill="#bfe0f7" /></>),
  pipes: (<><path d="M1 2h6v2H5v8q0 2-2 2H1v-2h1V4H1z" fill="#eee" stroke="#777" /><path d="M8 1h4q3 0 3 3v11h-3V5H11v9H9V5H8z" fill="#eee" stroke="#777" /></>),
  pressure: (<><path d="M1 2h6v2H5v8q0 2-2 2H1v-2h1V4H1z" fill="#bbb" stroke="#555" /><path d="M8 1h4q3 0 3 3v11h-3V5H11v9H9V5H8z" fill="#bbb" stroke="#555" /></>),
};

interface TreeNode {
  depth: number;
  label: string;
  icon: string;
  box?: 'minus' | 'plus' | 'dot';
  last?: boolean;
  state?: 'selected' | 'focused';
}

const tree: TreeNode[] = [
  { depth: 0, label: 'Drawing5', icon: 'drawing', box: 'minus' },
  { depth: 1, label: 'Points', icon: 'point' },
  { depth: 1, label: 'Point Groups', icon: 'pointGroup', box: 'plus' },
  { depth: 1, label: 'Surfaces', icon: 'surface', box: 'minus' },
  { depth: 2, label: 'Surface1', icon: 'surface', box: 'minus', last: true, state: 'selected' },
  { depth: 3, label: 'Masks', icon: 'masks' },
  { depth: 3, label: 'Watersheds', icon: 'watersheds' },
  { depth: 3, label: 'Definition', icon: 'definition', box: 'minus', last: true },
  { depth: 4, label: 'Boundaries', icon: 'boundaries' },
  { depth: 4, label: 'Breaklines', icon: 'breaklines' },
  { depth: 4, label: 'Contours', icon: 'contours', state: 'focused' },
  { depth: 4, label: 'DEM Files', icon: 'dem' },
  { depth: 4, label: 'Drawing Ob...', icon: 'objects' },
  { depth: 4, label: 'Edits', icon: 'edits' },
  { depth: 4, label: 'Point Files', icon: 'pointFiles', box: 'dot' },
  { depth: 4, label: 'Point Groups', icon: 'pointGroup' },
  { depth: 4, label: 'Point Surve...', icon: 'pointSurvey' },
  { depth: 4, label: 'Figure Surv...', icon: 'figureSurvey', last: true },
  { depth: 1, label: 'Alignments', icon: 'alignments', box: 'plus' },
  { depth: 1, label: 'Feature Lines', icon: 'feature' },
  { depth: 1, label: 'Sites', icon: 'sites' },
  { depth: 1, label: 'Turnouts and Crossov...', icon: 'turnouts', box: 'plus' },
  { depth: 1, label: 'Catchments', icon: 'catchments' },
  { depth: 1, label: 'Pipe Networks', icon: 'pipes', box: 'plus' },
  { depth: 1, label: 'Pressure Networks', icon: 'pressure' },
];

const guide = 'stroke-[#777] [stroke-dasharray:1_1]';

function TreeRow({ node }: { node: TreeNode }) {
  const { depth, box, state } = node;
  const label =
    state === 'selected' ? 'bg-[#a0a0a0]' : state === 'focused' ? 'outline-1 -outline-offset-1 outline-dotted outline-black' : '';
  return (
    <li className="flex h-5 items-center">
      {Array.from({ length: depth }, (_, i) => (
        <svg key={i} width="19" height="20" className="shrink-0" aria-hidden="true">
          {i < 2 && <path d="M9.500 0v20" className={guide} />}
        </svg>
      ))}
      <svg width="19" height="20" className="shrink-0" fill="none" aria-hidden="true">
        <path d={depth === 0 ? 'M9.500 10v10' : node.last ? 'M9.500 0v10' : 'M9.500 0v20'} className={guide} />
        <path d="M10 9.500h8" className={guide} />
        {box && <path d="M5.500 5.500h8v8h-8z" fill="#fff" stroke={box === 'dot' ? '#555' : '#999'} />}
        {box === 'dot' && <circle cx="9.500" cy="9.500" r="2.500" fill="#444" />}
        {(box === 'minus' || box === 'plus') && <path d="M7 9.500h5" stroke="#2c4a9a" />}
        {box === 'plus' && <path d="M9.500 7v5" stroke="#2c4a9a" />}
      </svg>
      <span className="ml-[2px] flex pb-px">
        <Svg>{treeIcons[node.icon]}</Svg>
      </span>
      <span className={`ml-[3px] h-[19px] flex-1 whitespace-nowrap pl-[3px] leading-[19px] ${label} ${depth === 0 ? 'font-bold' : ''}`}>
        {node.label}
      </span>
    </li>
  );
}

function SideTabs({ tabs }: { tabs: string[] }) {
  return (
    <div className="flex w-5 shrink-0 flex-col pt-[22px]">
      {tabs.map((tab, i) => (
        <button
          key={tab}
          className={`flex h-[121px] items-center justify-center rounded-r border-b border-r border-[#262b35] pl-[2px] ${
            i === 0 ? 'border-t bg-[#3d4452] text-[#e4e5e7]' : 'border-l bg-[#2e333f] text-[#b4b7bc]'
          }`}
        >
          <span className="rotate-180 whitespace-nowrap leading-4 [writing-mode:vertical-rl]">{tab}</span>
        </button>
      ))}
    </div>
  );
}

function PaneTitle({ children }: { children: ReactNode }) {
  return (
    <h2 className="flex h-5 items-center gap-[5px] rounded-t bg-[#2e323e] pb-[2px] pl-[6px] text-[#e4e5e7]">
      <svg width="4" height="11" viewBox="0 0 4 11" className="mt-[3px]" aria-hidden="true">
        <path d="M.5 0v11M2.500 0v11" stroke="#9a9da4" strokeDasharray="1 1" />
      </svg>
      {children}
    </h2>
  );
}

function Toolspace() {
  return (
    <aside className="flex w-[237px] shrink-0 pt-[6px]">
      <div className="flex w-[217px] flex-col pb-1">
        <PaneTitle>TOOLSPACE</PaneTitle>
        <div className="flex h-[30px] items-center px-[5px]">
          <button aria-label="Preview" className="mr-auto">
            <Svg>
              <path d="M0 0h16v16H0z" fill="#c9cdd1" />
              <path d="M0 0h16v3H0z" fill="#8f9499" />
              <path d="M3 7l4-3h6v6l-3 4H3z" fill="#2fb567" />
              <path d="M3 7h7v7M10 7l3-3" stroke="#15803d" />
            </Svg>
          </button>
          <button aria-label="Toggle panorama" className="mr-3">
            <Svg>
              <path d="M1 1.500h5M1 4.500h5M1 7.500h5M6 10.500h4M6 13.500h4M11 10.500h4M11 13.500h4" stroke={W} strokeWidth="2" />
              <path d="M8 2.500h4.500V6M10 5l2.500 2L15 5" stroke={W} strokeWidth="1.200" />
            </Svg>
          </button>
          <button aria-label="Item view" className="mr-[10px]">
            <Svg>
              <path d="M0 1h2v13H0zM3 1h9v13H3zM13 8h3v6h-3z" fill="#d8d8d8" />
              <path d="M13 2h3v4h-3z" fill={W} />
              <path d="M4 4h7M4 7h7M4 10h7" stroke="#6a6f78" strokeDasharray="2 1" />
            </Svg>
          </button>
          <button aria-label="Help" className="h-4 w-4 rounded-full bg-[#c6c6c6] text-[13px] font-bold leading-4 text-[#3d4452]">?</button>
        </div>
        <div className="relative mx-px mt-px">
          <select aria-label="View" className="block h-5 w-full appearance-none bg-white pl-[3px] text-[12px] leading-5 text-black">
            <option>Active Drawing View</option>
          </select>
          <svg width="9" height="5" viewBox="0 0 9 5" fill="none" className="pointer-events-none absolute right-1 top-2" aria-hidden="true">
            <path d="M.5.5l4 4 4-4" stroke="#555" />
          </svg>
        </div>
        <div className="mt-[2px] h-[520px] border border-[#8c9096] bg-[#f0f0f0] text-black">
          <div className="flex">
            <ul className="h-[501px] w-[199px] bg-white pl-1 pt-[2px]">
              {tree.map((node, i) => (
                <TreeRow key={i} node={node} />
              ))}
            </ul>
            <div className="flex flex-1 justify-center pt-[18px]">
              <div className="h-[286px] w-[2px] bg-[#868686]" />
            </div>
          </div>
          <div className="ml-[18px] mt-[6px] h-[2px] w-[126px] bg-[#868686]" />
        </div>
        <div className="mt-[7px] flex-1 border border-[#9c9fa5]" />
      </div>
      <SideTabs tabs={['Prospector', 'Settings', 'Survey', 'Toolbox']} />
    </aside>
  );
}

/* ------------------------------------------------------------------ */
/* Properties                                                          */
/* ------------------------------------------------------------------ */

interface Row {
  name: string;
  value: string;
  dim?: boolean;
  lead?: 'swatch' | 'line';
}

const sections: { title: string; rows: Row[] }[] = [
  {
    title: 'General',
    rows: [
      { name: 'Color', value: 'ByLayer', lead: 'swatch' },
      { name: 'Layer', value: '0' },
      { name: 'Linetype', value: 'ByLayer', lead: 'line' },
      { name: 'Linetype scale', value: '1.000' },
      { name: 'Lineweight', value: 'ByLayer', lead: 'line' },
      { name: 'Transparency', value: 'ByLayer' },
      { name: 'Thickness', value: '0.000' },
    ],
  },
  { title: '3D Visualization', rows: [{ name: 'Material', value: 'ByLayer' }] },
  {
    title: 'Plot style',
    rows: [
      { name: 'Plot style', value: 'ByColor', dim: true },
      { name: 'Plot style table', value: 'None' },
      { name: 'Plot table attached...', value: 'Model', dim: true },
      { name: 'Plot table type', value: 'Not available', dim: true },
    ],
  },
  {
    title: 'View',
    rows: [
      { name: 'Center X', value: '814191.735', dim: true },
      { name: 'Center Y', value: '8135817.590', dim: true },
      { name: 'Center Z', value: '0.000', dim: true },
      { name: 'Height', value: '574.742', dim: true },
      { name: 'Width', value: '957.657', dim: true },
    ],
  },
  {
    title: 'Misc',
    rows: [
      { name: 'Annotation scale', value: '1:1000' },
      { name: 'UCS icon On', value: 'Yes' },
      { name: 'UCS icon at origin', value: 'No' },
      { name: 'UCS per viewport', value: 'Yes' },
      { name: 'UCS Name', value: '' },
      { name: 'Visual Style', value: '2D Wireframe' },
    ],
  },
];

function Properties() {
  return (
    <aside className="flex w-[345px] shrink-0 pl-[5px] pr-[5px] pt-[6px]">
      <div className="flex w-[315px] flex-col">
        <PaneTitle>PROPERTIES</PaneTitle>
        <div className="mb-1 mt-3 flex items-center pl-[17px]">
          <div className="relative w-[215px]">
            <select aria-label="Selection" className="block h-[23px] w-full appearance-none rounded-xs border border-[#2b303b] bg-[#4c586c] pl-[3px] text-[12px] leading-5 text-[#e6e7e9]">
              <option>No selection</option>
            </select>
            <span className="pointer-events-none absolute right-[3px] top-[10px] flex"><Caret /></span>
          </div>
          <button aria-label="Toggle PICKADD" className="ml-2">
            <Svg>
              <path d="M0 2h9v9H0zM5 7h9v9H5z" fill="#84c6f7" />
              <path d="M4.500 16V6.500H14" stroke="#3d4452" />
              <path d="M12 0v8M8 4h8" stroke="#3ddc84" strokeWidth="2" />
            </Svg>
          </button>
          <button aria-label="Select objects" className="ml-2">
            <Svg>
              <path d="M.5.5h13v10H.5z" stroke="#3ddc84" strokeDasharray="2 1" />
              <path d="M2 2h10v7H2z" fill="#7bd7a0" />
              <path d={cursor} transform="translate(8 3) scale(.9)" fill="#fff" />
            </Svg>
          </button>
          <button aria-label="Quick select" className="ml-2">
            <Svg>
              <path d={cursor} transform="translate(0 2) scale(.9)" fill="#fff" />
              <path d="M9 0l1 3h3l-3 2-1 3-1-3-3-2h3z" fill={Y} />
              <path d="M8 7h8v9H8z" fill="#fff" />
              <path d="M9.500 9.500h5M9.500 11.500h5M9.500 13.500h5" stroke="#3a8be0" />
            </Svg>
          </button>
        </div>
        {sections.map((section) => (
          <section key={section.title} className="mb-[3px] ml-[17px] mr-[11px]">
            <h3>
              <button className="flex h-5 w-full items-center justify-between bg-[#2e323e] pl-[7px] pr-2 font-bold text-[#f2f2f3]">
                {section.title}
                <Caret />
              </button>
            </h3>
            <table className="ml-[17px] w-[270px] table-fixed border-separate border-spacing-0">
              <tbody>
                {section.rows.map((row) => (
                  <tr key={row.name}>
                    <th scope="row" className="h-[19px] w-[124px] whitespace-nowrap border-b border-l border-[#2b303b] p-0 pl-[6px] pt-[2px] text-left font-normal leading-4 text-[#c5c7cb]">
                      {row.name}
                    </th>
                    <td className={`h-[19px] border-b border-x border-[#2b303b] p-0 pl-[3px] leading-[18px] ${row.dim ? 'text-[#8c9097]' : 'text-[#ececed]'}`}>
                      <span className="flex items-center">
                        {row.lead === 'swatch' && <span className="mr-[6px] h-[14px] w-[14px] bg-white" />}
                        {row.lead === 'line' && <span className="mr-1 h-px w-[66px] bg-white" />}
                        {row.value}
                      </span>
                    </td>
                  </tr>
                ))}
              </tbody>
            </table>
          </section>
        ))}
      </div>
      <SideTabs tabs={['Design', 'Display', 'Extended Data', 'Object Class']} />
    </aside>
  );
}

/* ------------------------------------------------------------------ */
/* Model space                                                         */
/* ------------------------------------------------------------------ */

function Terrain() {
  return (
    <svg width="1294" height="776" viewBox="585 174 1294 776" fill="none" className="absolute left-0 top-0" aria-hidden="true">
      <path d={meshPath} stroke="#666" strokeWidth="1.150" />
      {minorContours.map((points) => (
        <polyline key={points} points={points} stroke="#86878b" />
      ))}
      {majorContours.map((points) => (
        <polyline key={points} points={points} stroke="#bdbdbd" strokeWidth="1.200" />
      ))}
      <polygon points={boundary.map((p) => p.join(',')).join(' ')} stroke="#2edb8a" strokeWidth="1.300" />
      {/* UCS axes */}
      <path d="M604.500 881v50.500H655M600.500 926.500h9v9h-9zM606 864l6.500 6.500V877M619 864l-6.500 6.500M659 917l13 13M672 917l-13 13" stroke="#e8e8e8" />
      <path d="M988.500 706.500v16l4-4 3 6 2-1-3-6h5z" fill="#fff" stroke="#111" strokeWidth=".8" />
      {/* grip cluster under the view label */}
      <g stroke="#e8e8e8" strokeWidth="1.500">
        <path d="M589 196h4v4h-4zM597 197h3v3h-3zM599 203h4v3h-4zM589 205h5v5h-5z" />
        <path d="M594 201l2 2M596 209h6M602 199v2" />
      </g>
    </svg>
  );
}

function ViewCube() {
  return (
    <div className="absolute right-4 top-10 flex flex-col items-center">
      <svg width="132" height="132" viewBox="0 0 132 132" className="overflow-visible" role="img" aria-label="View cube">
        <circle cx="66" cy="67" r="54" fill="none" stroke="#474c52" strokeWidth="13" />
        <rect x="40" y="40" width="52" height="52" fill="#b2b4b6" stroke="#77736c" />
        <rect x="50" y="50" width="32" height="33" fill="#a1a5ab" />
        <g className="font-['Liberation_Sans'] font-bold" textAnchor="middle">
          <g fontSize="21" fill="#adaeb1" stroke="#222933" strokeWidth="2" style={{ paintOrder: 'stroke' }}>
            <text x="66" y="17">N</text>
            <text x="9" y="74">W</text>
            <text x="122" y="74">E</text>
            <text x="66" y="131">S</text>
          </g>
        </g>
        <text x="66" y="70" fontSize="12" fill="#4c535d" textAnchor="middle" className="font-['Open_Sans'] font-bold">TOP</text>
      </svg>
      <button className="mt-[22px] flex h-[17px] w-12 items-center justify-between rounded-[4px] border border-[#aeb1bd] bg-[#9093a2] px-1 font-['Liberation_Sans'] text-[11px] text-[#43474f]">
        WCS
        <svg width="8" height="5" viewBox="0 0 8 5" aria-hidden="true">
          <path d="M.5.5h7L4 4.500z" fill="#b5b8b0" stroke="#777b80" />
        </svg>
      </button>
    </div>
  );
}

function NavBar() {
  const down = (
    <svg width="5" height="3" viewBox="0 0 5 3" aria-hidden="true">
      <path d="M0 0h5L2.500 3z" fill="#3a3f45" />
    </svg>
  );
  const items = [
    {
      label: 'Steering wheel',
      icon: <><path d="M12 1h11v11q-1 11-11 11T1 12Q2 1 12 1z" /><circle cx="12" cy="12" r="6.500" /><path d="M6 18l2-2M18 18l-2-2" /></>,
      menu: true,
    },
    {
      label: 'Pan',
      icon: <path d="M7 22q-1-5-6-9 1-2 5 1L4 5q1-2 3 1l2 6-1-9q2-3 3 0l1 8 1-8q2-2 3 0l-1 9 3-7q3-1 2 2l-3 9q-1 6-3 6z" />,
    },
    {
      label: 'Zoom extents',
      icon: <><path d="M1 1h4M1 1v4M1 1l14 14M15 1h-4M15 1v4M15 1L1 15M1 15h4M1 15v-4" /><circle cx="16" cy="15" r="4.500" strokeWidth="1.800" /><path d="M19 18l5 5" strokeWidth="2.500" /></>,
      menu: true,
    },
    {
      label: 'Orbit',
      icon: <><path d="M10 22V6H8l4-5 4 5h-2v16zM9 10q-9 2-7 5t14 2q9-3 6-6-2-2-7-2" /><path d="M6 14v6l-4-3z" fill="#3a3f45" /></>,
      menu: true,
    },
    {
      label: 'ShowMotion',
      icon: <><path d="M1 1h6v6H1zM9 1h6v6H9zM17 1h6v6h-6zM1 10h16v13H1z" /><path d="M6 13l6 3.500-6 3.500z" fill="#3a3f45" /></>,
    },
  ];
  return (
    <div className="absolute right-1 top-[236px] flex h-[213px] w-8 flex-col items-center gap-[6px] rounded-[4px] border border-[#6d7277] bg-[#555a60] pt-[19px]">
      <span className="absolute right-[3px] top-[2px] h-[7px] w-[7px] rounded-full bg-[#3a3f45]" />
      {items.map((item) => (
        <button key={item.label} aria-label={item.label} className="flex flex-col items-center gap-[5px]">
          <svg width="24" height="24" viewBox="0 0 24 24" fill="none" stroke="#3a3f45" strokeWidth="1.200" aria-hidden="true">
            {item.icon}
          </svg>
          {item.menu && down}
        </button>
      ))}
      <span className="absolute bottom-[2px] right-[2px] h-[7px] w-[7px] rounded-full border-2 border-[#3a3f45]" />
    </div>
  );
}

function CommandLine() {
  return (
    <div className="absolute bottom-0 left-[201px] right-[201px] flex h-[26px]">
      <div className="flex w-[58px] items-center justify-between bg-[#2c313d] pl-[4px] pr-[6px]">
        <svg width="5" height="17" viewBox="0 0 5 17" aria-hidden="true">
          <path d="M1 0v17M4 0v17" stroke="#b0b0b0" strokeWidth="2" strokeDasharray="2 1" />
        </svg>
        <button aria-label="Close command line">
          <svg width="10" height="10" viewBox="0 0 10 10" aria-hidden="true">
            <path d="M1 1l8 8M9 1L1 9" stroke="#b8b8b8" strokeWidth="1.800" />
          </svg>
        </button>
        <button aria-label="Customize">
          <Svg>
            <path d="M1 13l7-7q-1-3 2-5l2-.5-2 3 2 2 3-2q1 4-2 5-2 1-3 0l-7 7q-3 0-2-2.500z" fill="#b8b8b8" />
          </Svg>
        </button>
      </div>
      <div className="mt-px flex flex-1 items-center rounded-l-xs bg-white/70 pl-1 pr-1">
        <svg width="26" height="12" viewBox="0 0 26 12" fill="none" aria-hidden="true">
          <path d="M.5.500h15v11H.5zM0 2h16" stroke="#55585d" />
          <path d="M3 5l2.500 2L3 9M7 9h4" stroke="#55585d" />
          <path d="M18.500 4h7L22 8z" fill="#55585d" />
        </svg>
        <input
          aria-label="Command"
          placeholder="Type a command"
          className="ml-[6px] min-w-0 flex-1 bg-transparent font-['DejaVu_Sans_Mono'] text-[12px] italic outline-none placeholder:text-[#66696e]"
        />
        <svg width="7" height="4" viewBox="0 0 7 4" aria-hidden="true">
          <path d="M0 4h7L3.500 0z" fill="#55585d" />
        </svg>
      </div>
    </div>
  );
}

function ModelSpace() {
  return (
    <main className="relative min-w-0 flex-1 overflow-hidden bg-[#222933]">
      <Terrain />
      <p className="absolute left-[3px] top-[6px] leading-4 text-[#e6e6e6]">[−][Top][2D Wireframe]</p>
      <div className="absolute right-3 top-[9px] flex items-center gap-[9px]">
        <button aria-label="Minimize">
          <svg width="11" height="12" viewBox="0 0 11 12" aria-hidden="true"><path d="M0 7h11v3H0z" fill="#f0f0f0" /></svg>
        </button>
        <button aria-label="Restore">
          <svg width="11" height="12" viewBox="0 0 11 12" fill="none" aria-hidden="true"><path d="M1 4h6v6H1z" stroke="#f0f0f0" strokeWidth="2" /><path d="M3 1h7v8" stroke="#f0f0f0" strokeWidth="1.500" /></svg>
        </button>
        <button aria-label="Close">
          <svg width="10" height="10" viewBox="0 0 10 10" aria-hidden="true"><path d="M1 1l8 8M9 1L1 9" stroke="#f0f0f0" strokeWidth="2.500" /></svg>
        </button>
      </div>
      <ViewCube />
      <NavBar />
      <CommandLine />
    </main>
  );
}

/* ------------------------------------------------------------------ */
/* Right-hand toolbars                                                 */
/* ------------------------------------------------------------------ */

const target = (
  <>
    <circle cx="6" cy="5" r="2.500" stroke={W} />
    <path d="M6 0v3M6 7v3M1 5h3M8 5h3" stroke={W} />
  </>
);
const dashAxes = <path d="M1.500 0v15.500H16" stroke={W} strokeDasharray="2 1" />;
const tiny = <path d="M8.500 8.500h7v7h-7zM12 9v6M9 12h6" fill="#3d4452" stroke={W} />;
const funnel = <path d="M0 7h8l-2 3v5l-2 1v-6z" fill="#bcbcbc" />;
const eraser = <><path d="M8 12l4-4 4 4-4 4z" fill={Y} /><path d="M11 9l3-2 2 3-2 1z" fill="#fff" /></>;
const curve = <path d="M8 10h2M12 9q4 1 2 5l-4 2" stroke={B} strokeDasharray="2 1" strokeWidth="1.500" />;
const hash = <path d="M9 11h7M9 14h7M11 9.500v6.500M14 9.500v6.500" stroke={B} />;

const toolGroups: { label: string; icon: ReactNode }[][] = [
  [
    { label: 'Angle distance', icon: <><path d="M1.500 15V1.500H15" stroke={W} strokeWidth="1.300" /><path d="M3 3h8q0 6-8 7z" fill="#b8bcc2" /><path d="M11 3q0 6-8 7" stroke={B} strokeWidth="1.300" /></> },
    { label: 'Bearing distance', icon: <>{dashAxes}<path d="M3 2q6 1 7 5l-7 6z" fill="#9da2a9" /><path d="M4 2q6 2 7 5" stroke={B} strokeWidth="1.500" /><path d="M2 15L12 5" stroke={W} /></> },
    { label: 'Azimuth distance', icon: <><path d="M4.500 1v14" stroke={W} strokeDasharray="2 1" /><path d="M7 3q4 3 2 7l-2 2z" fill="#9da2a9" /><path d="M7 1q6 4 3 10l-3 3" stroke={B} strokeWidth="1.300" /></> },
    { label: 'Deflection distance', icon: <><path d="M3.500 1v14" stroke={W} strokeDasharray="2 1" /><path d="M5 3h5l-4 6z" fill="#9da2a9" /><path d="M5 2q4 0 5 4" stroke={B} strokeWidth="1.300" /><path d="M4 14l8-11" stroke={W} /></> },
    { label: 'Northing easting', icon: <><path d="M1 1h5v14H1zM8 1h3l3 4H8zM7 1v14M0 8h14" fill="#ddd" /><path d="M6.500 1v14M1 7.500h7" stroke="#777" />{tiny}</> },
    { label: 'Grid northing', icon: <><circle cx="7" cy="7" r="7" fill="#57b0ef" /><path d="M2 3q4-3 6-1T4 8z M9 6q4 0 4 3l-4 3z" fill="#cfe8fb" />{tiny}</> },
    { label: 'Latitude longitude', icon: <><circle cx="8" cy="8" r="7.500" fill="#a8d8f8" stroke="#3f9be0" /><path d="M8 1v14M1 8h14M3 3q5 4 10 0M3 13q5-4 10 0M8 1Q2 8 8 15M8 1q6 7 0 14" stroke="#3f9be0" /><path d="M4.500 8.500h3v3h-3zM9.500 4.500h3v3h-3z" fill="#fff" stroke="#333" /></> },
    { label: 'Point number', icon: <>{target}{hash}</> },
    { label: 'Point name', icon: <>{target}<path d="M9.500 15.500l2.500-6 3 6M10.500 13.500h3.500" stroke="#bbb" strokeWidth="1.500" /></> },
    { label: 'Point object', icon: <>{target}<path d={cursor} transform="translate(8 4) scale(.85)" fill="#fff" /></> },
    { label: 'Zoom to point', icon: <>{target}<circle cx="11" cy="10.500" r="3" fill="#888" stroke={W} /><path d="M13 13l3 3" stroke={W} strokeWidth="1.500" /></> },
    { label: 'Side shot', icon: <><path d="M2.500 1v14" stroke={W} strokeDasharray="2 1" /><path d="M5 4h6v7H5z" fill="#999" stroke={W} /><path d="M5 11l6-7" stroke="#444" /><path d="M6 2h7v7" stroke={B} strokeWidth="1.300" /></> },
    { label: 'Station offset', icon: <><path d="M0 2.500h12" stroke={B} strokeDasharray="3 1" strokeWidth="2" /><path d="M6.500 4v12M9 8h2v3H9z" stroke={B} /><path d="M12 3q4 1 3 5l-4 3" stroke={W} strokeDasharray="2 1" /></> },
  ],
  [{ label: 'Transparent selection', icon: <>{funnel}{target}<path d={cursor} transform="translate(8 3) scale(.7)" fill="#fff" /><path d="M11 10l5 5M16 11v5h-5" stroke="#fff" strokeWidth="1.500" /></> }],
  [
    { label: 'Profile station', icon: <><path d="M6.500 0v12" stroke={B} strokeDasharray="3 1" /><path d="M0 5.500h12" stroke={B} strokeDasharray="2 1" strokeWidth="1.500" /><path d="M12 6q4 2 3 5-3 4-9 4" stroke={W} strokeDasharray="2 1" strokeWidth="1.300" /></> },
    { label: 'Surface along profile', icon: <><path d="M5 0l5 4-2 5H2L0 4z" fill="#ccc" />{curve}</> },
    { label: 'Point along profile', icon: <>{target}{curve}</> },
  ],
  [
    { label: 'Grade station', icon: <>{dashAxes}<path d="M3 7h6v6" stroke={B} strokeWidth="1.300" /><path d="M8 6h2v2H8z" fill="#fff" /></> },
    { label: 'Grade elevation', icon: <><path d="M4.500 5v11H16" stroke={W} strokeDasharray="2 1" /><path d="M1 6l5-5M3 1h3v3" stroke={W} /><path d="M6 14l7-7v7" stroke={B} strokeWidth="1.300" /></> },
    { label: 'Grade length', icon: <>{dashAxes}<path d="M3 4l7 6M3 11l6-5" stroke={B} strokeWidth="1.300" /><path d="M10 14l4-4M11 10h3v3" stroke={W} /></> },
    { label: 'Length slope', icon: <><path d="M1 6l5-5M3 1h3v3M6 13h9M13 11l2 2-2 2M8 11l-2 2 2 2" stroke={W} /><path d="M1 14l9-8" stroke={B} strokeWidth="1.300" /></> },
    { label: 'Match radius', icon: <><circle cx="7" cy="7" r="6.500" stroke={W} strokeWidth="1.300" /><path d="M4 4l6 6M4 7V4h3" stroke={W} />{eraser}</> },
    { label: 'Match length', icon: <><path d="M1 13L13 2M1 9v5h5M9 1h5v4" stroke={W} strokeWidth="1.300" />{eraser}</> },
    { label: 'Curve calculator', icon: <><path d="M1 15Q2 3 14 1" stroke={W} strokeDasharray="4 2" strokeWidth="1.500" /><path d="M8 7h8v9H8z" fill="#fff" /><path d="M9.500 9h5M9.500 12h5M9.500 14h5" stroke="#2f8be0" strokeWidth="1.500" strokeDasharray="1.500 .5" /></> },
  ],
];

const pickTools: { label: string; icon: ReactNode }[] = [
  { label: 'Pick point', icon: <>{funnel}{target}<path d={cursor} transform="translate(9 4) scale(.85)" fill="#fff" /></> },
  { label: 'Pick grid', icon: <><path d="M2 0h5v6H2zM8 0h4l2 5H8z" fill="#ddd" />{funnel}{tiny}</> },
  { label: 'Pick number', icon: <>{funnel}{target}{hash}</> },
];

function ToolButton({ label, icon }: { label: string; icon: ReactNode }) {
  return (
    <button aria-label={label} className="flex h-[22px] items-center">
      <Svg>{icon}</Svg>
    </button>
  );
}

function Grip() {
  return (
    <svg width="14" height="4" viewBox="0 0 14 4" aria-hidden="true">
      <path d="M0 .5h14M0 2.500h14" stroke="#c8c8c8" strokeDasharray="1 1" />
    </svg>
  );
}

function RightToolbars() {
  return (
    <div className="flex w-8 shrink-0 flex-col items-center bg-[#3d4452] pr-px">
      <div className="flex w-[25px] flex-col items-center border border-[#262b35] pt-[2px]">
        <Grip />
        <div className="pt-[2px]">
          {toolGroups.map((group, i) => (
            <div key={i} className="flex flex-col items-center">
              {i > 0 && <div className="my-[2px] h-[2px] w-[19px] bg-[#e8e8e8]" />}
              {group.map((tool) => (
                <ToolButton key={tool.label} {...tool} />
              ))}
            </div>
          ))}
        </div>
      </div>
      <div className="mt-px flex w-[25px] flex-col items-center border border-[#262b35] pt-[2px]">
        <Grip />
        {pickTools.map((tool) => (
          <ToolButton key={tool.label} {...tool} />
        ))}
      </div>
    </div>
  );
}

export default function App() {
  return (
    <div className="flex h-screen bg-[#222933] font-['Open_Sans',sans-serif] text-[12px] leading-4">
      <div className="flex min-w-0 flex-1 flex-col">
        <MenuTabs />
        <Ribbon />
        <FileTabs />
        <div className="ml-[3px] mr-[3px] flex min-h-0 flex-1 border-t-4 border-[#3d4452]">
          <div className="-mt-1 flex shrink-0 bg-[#3d4452]">
            <Toolspace />
            <Properties />
          </div>
          <ModelSpace />
          <RightToolbars />
        </div>
      </div>
      <div className="flex w-[5px] shrink-0 flex-col gap-[30px] border-l-2 border-[#0d86c9] bg-black pt-[27px]">
        <div className="h-[22px] bg-[#d6d6d6]" />
        <div className="h-[17px] w-[2px] bg-[#d6d6d6]" />
      </div>
    </div>
  );
}
